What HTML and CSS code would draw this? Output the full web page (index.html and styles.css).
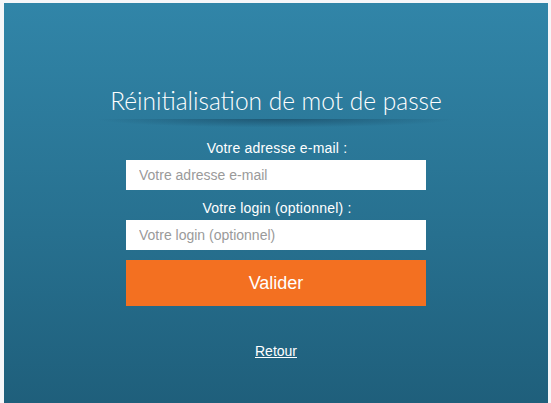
FILE: index.html
```html
<!DOCTYPE html>
<html lang="fr">
<head>
<meta charset="utf-8">
<title>Réinitialisation de mot de passe</title>
<link rel="stylesheet" href="styles.css">
</head>
<body>
<div class="panel">
  <h1 class="title">Réinitialisation de mot de passe</h1>
  <div class="title-shadow"></div>
  <form class="form">
    <label class="label" for="email">Votre adresse e-mail :</label>
    <input class="input" id="email" type="text" placeholder="Votre adresse e-mail">
    <label class="label" for="login">Votre login (optionnel) :</label>
    <input class="input" id="login" type="text" placeholder="Votre login (optionnel)">
    <button class="btn" type="button">Valider</button>
  </form>
  <a class="back" href="#">Retour</a>
</div>
</body>
</html>
```
FILE: styles.css
```css
html, body {
  margin: 0;
  padding: 0;
}
body {
  background: #f6f6f9;
  font-family: "Liberation Sans", Arial, sans-serif;
  height: 403px;
  overflow: hidden;
}
.panel {
  margin: 3px 3px 0 4px;
  height: 420px;
  background: linear-gradient(to bottom, #3185a8 0%, #27708f 55%, #1e5d79 100%);
  display: flex;
  flex-direction: column;
  align-items: center;
  padding-top: 82px;
  box-sizing: border-box;
}
.title {
  margin: 0;
  font-family: Lato, sans-serif;
  font-weight: 300;
  font-size: 24.5px;
  line-height: 32px;
  color: #ffffff;
}
.title-shadow {
  width: 360px;
  height: 14px;
  margin-top: 2px;
  background: radial-gradient(ellipse 50% 60% at 50% 0%, rgba(20, 60, 85, 0.55), rgba(20, 60, 85, 0) 100%);
}
.form {
  width: 300px;
  display: flex;
  flex-direction: column;
  align-items: stretch;
  margin-top: 7px;
}
.label {
  display: block;
  text-align: center;
  color: #ffffff;
  font-size: 14px;
  line-height: 16px;
  padding-left: 2px;
  margin-bottom: 4px;
  letter-spacing: 0.2px;
}
.input {
  height: 30px;
  box-sizing: border-box;
  border: none;
  background: #ffffff;
  padding: 0 13px;
  font-family: "Liberation Sans", Arial, sans-serif;
  font-size: 14px;
  color: #333;
  margin-bottom: 10px;
  outline: none;
}
.input::placeholder {
  color: #9a9a9a;
}
.btn {
  height: 46px;
  border: none;
  background: #f37021;
  color: #ffffff;
  font-family: "Liberation Sans", Arial, sans-serif;
  font-size: 18px;
  cursor: pointer;
}
.back {
  margin-top: 37px;
  color: #ffffff;
  font-size: 14px;
  text-decoration: underline;
}
```
